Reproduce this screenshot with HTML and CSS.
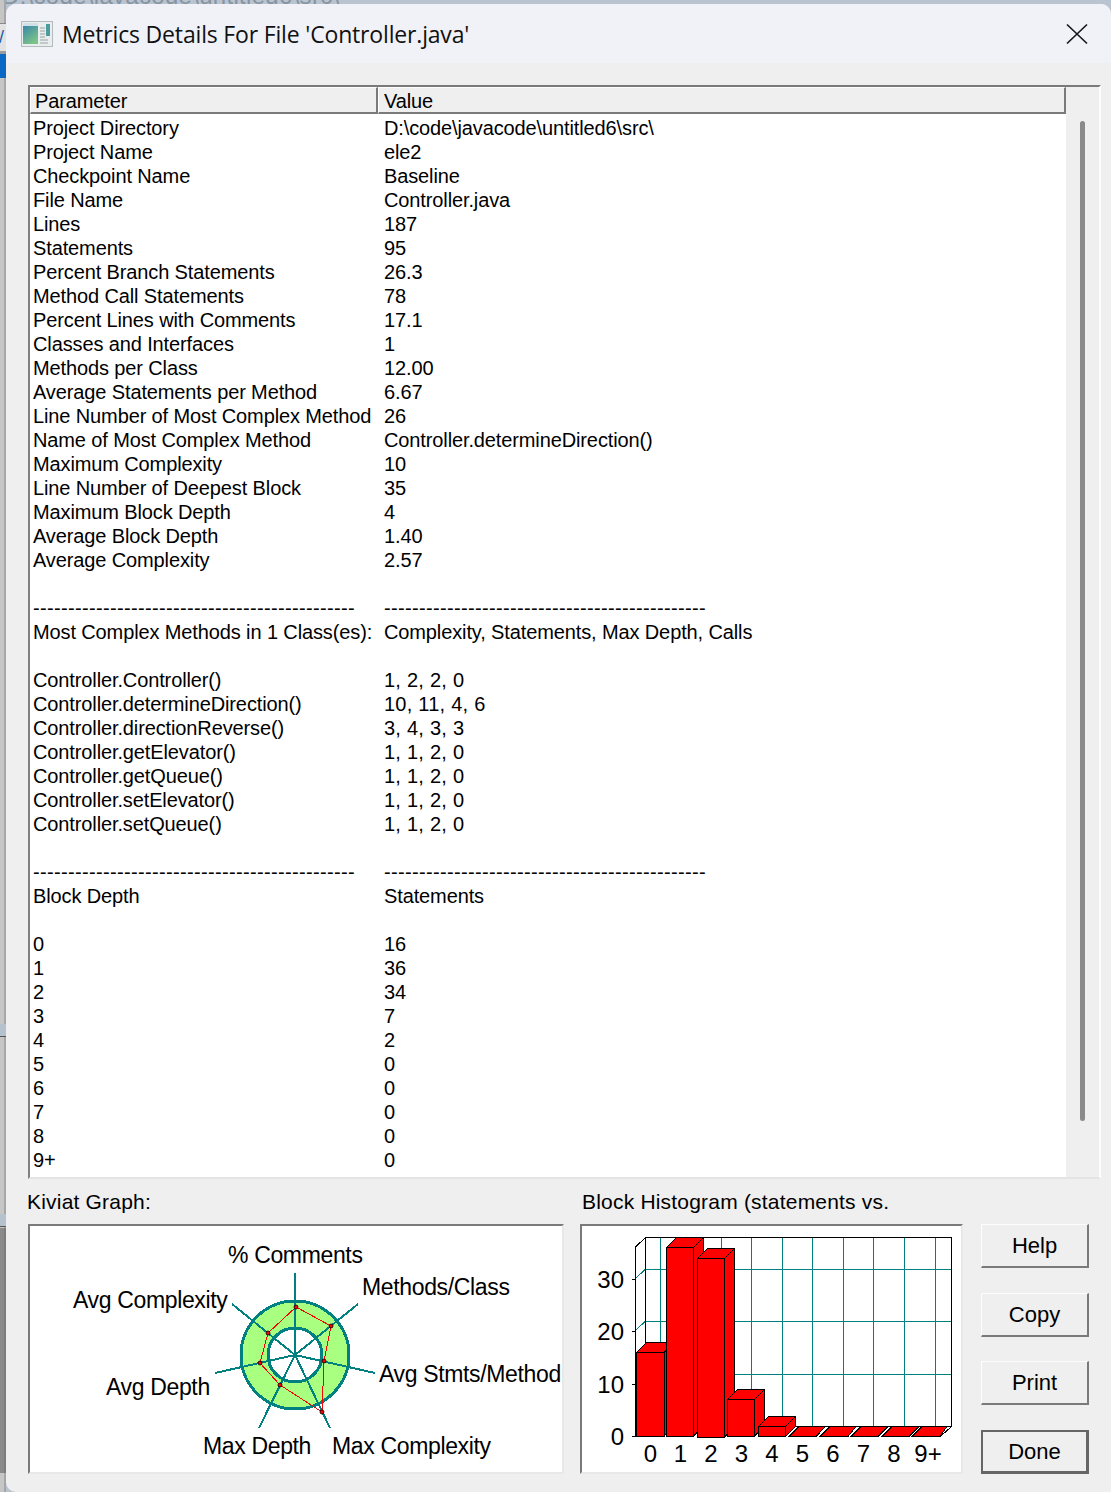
FILE: index.html
```html
<!DOCTYPE html>
<html lang="en">
<head>
<meta charset="utf-8">
<title>Metrics Details</title>
<link rel="stylesheet" href="styles.css">
</head>
<body>
<div class="behind-text">D:\code\javacode\untitled6\src\</div>
<div class="strip strip-base"></div>
<div class="strip strip-menu"><span class="menu-glyph">/</span></div>
<div class="strip strip-blue"></div>
<div class="strip strip-band strip-band-a"></div>
<div class="strip strip-band strip-band-b"></div>
<div class="strip strip-dark"></div>
<main class="window">
  <header class="titlebar">
    <svg class="app-icon" width="32" height="26" viewBox="0 0 32 26">
      <defs>
        <linearGradient id="ig" x1="0" y1="0" x2="0.6" y2="1"><stop offset="0" stop-color="#3a86ab"/><stop offset="1" stop-color="#7cc486"/></linearGradient>
      </defs>
      <rect x="0.5" y="0.5" width="31" height="25" fill="#e9edee" stroke="#b3bbbd"/>
      <rect x="2" y="2" width="15" height="21" fill="#cfe0e6"/>
      <rect x="2" y="5" width="15" height="18" fill="url(#ig)"/>
      <path d="M19 7h5M19 10h5M19 13h5M19 16h5M19 19h8M19 22h8" stroke="#9aa3a5" stroke-width="1"/>
      <rect x="25" y="3" width="4" height="12" fill="#4a9d9c"/>
    </svg>
    <h1 class="title">Metrics Details For File 'Controller.java'</h1>
    <svg class="close" width="22" height="22" viewBox="0 0 22 22"><path d="M1 1.500L21 20.500M21 1.500L1 20.500" stroke="#1a1a1a" stroke-width="1.700" fill="none"/></svg>
  </header>
  <div class="content">
    <section class="frame">
      <div class="listing">
        <div class="head"><div class="hcell hcell-a">Parameter</div><div class="hcell hcell-b">Value</div></div>
        <div class="rows">
          <div class="row"><span>Project Directory</span><span>D:\code\javacode\untitled6\src\</span></div>
          <div class="row"><span>Project Name</span><span>ele2</span></div>
          <div class="row"><span>Checkpoint Name</span><span>Baseline</span></div>
          <div class="row"><span>File Name</span><span>Controller.java</span></div>
          <div class="row"><span>Lines</span><span>187</span></div>
          <div class="row"><span>Statements</span><span>95</span></div>
          <div class="row"><span>Percent Branch Statements</span><span>26.3</span></div>
          <div class="row"><span>Method Call Statements</span><span>78</span></div>
          <div class="row"><span>Percent Lines with Comments</span><span>17.1</span></div>
          <div class="row"><span>Classes and Interfaces</span><span>1</span></div>
          <div class="row"><span>Methods per Class</span><span>12.00</span></div>
          <div class="row"><span>Average Statements per Method</span><span>6.67</span></div>
          <div class="row"><span>Line Number of Most Complex Method</span><span>26</span></div>
          <div class="row"><span>Name of Most Complex Method</span><span>Controller.determineDirection()</span></div>
          <div class="row"><span>Maximum Complexity</span><span>10</span></div>
          <div class="row"><span>Line Number of Deepest Block</span><span>35</span></div>
          <div class="row"><span>Maximum Block Depth</span><span>4</span></div>
          <div class="row"><span>Average Block Depth</span><span>1.40</span></div>
          <div class="row"><span>Average Complexity</span><span>2.57</span></div>
          <div class="row"></div>
          <div class="row row-dash"><span>----------------------------------------------</span><span>----------------------------------------------</span></div>
          <div class="row"><span>Most Complex Methods in 1 Class(es):</span><span>Complexity, Statements, Max Depth, Calls</span></div>
          <div class="row"></div>
          <div class="row row-list"><span>Controller.Controller()</span><span>1, 2, 2, 0</span></div>
          <div class="row row-list"><span>Controller.determineDirection()</span><span>10, 11, 4, 6</span></div>
          <div class="row row-list"><span>Controller.directionReverse()</span><span>3, 4, 3, 3</span></div>
          <div class="row row-list"><span>Controller.getElevator()</span><span>1, 1, 2, 0</span></div>
          <div class="row row-list"><span>Controller.getQueue()</span><span>1, 1, 2, 0</span></div>
          <div class="row row-list"><span>Controller.setElevator()</span><span>1, 1, 2, 0</span></div>
          <div class="row row-list"><span>Controller.setQueue()</span><span>1, 1, 2, 0</span></div>
          <div class="row"></div>
          <div class="row row-dash"><span>----------------------------------------------</span><span>----------------------------------------------</span></div>
          <div class="row"><span>Block Depth</span><span>Statements</span></div>
          <div class="row"></div>
          <div class="row"><span>0</span><span>16</span></div>
          <div class="row"><span>1</span><span>36</span></div>
          <div class="row"><span>2</span><span>34</span></div>
          <div class="row"><span>3</span><span>7</span></div>
          <div class="row"><span>4</span><span>2</span></div>
          <div class="row"><span>5</span><span>0</span></div>
          <div class="row"><span>6</span><span>0</span></div>
          <div class="row"><span>7</span><span>0</span></div>
          <div class="row"><span>8</span><span>0</span></div>
          <div class="row"><span>9+</span><span>0</span></div>
        </div>
      </div>
      <div class="scrollbar"><div class="thumb"></div></div>
    </section>
    <div class="captions">
      <div class="caption caption-kiviat">Kiviat Graph:</div>
      <div class="caption">Block Histogram (statements vs.</div>
    </div>
    <div class="bottom">
      <div class="graph graph-kiviat">
        <svg width="533" height="247" viewBox="30 1226 533 247" class="chart">
          <circle cx="295" cy="1355" r="40.500" fill="none" stroke="#a8ff80" stroke-width="27"/>
          <g class="crisp">
            <circle cx="295" cy="1355" r="54" fill="none" stroke="#008080" stroke-width="3"/>
            <circle cx="295" cy="1355" r="27" fill="none" stroke="#008080" stroke-width="3"/>
            <path d="M295 1355L295 1273M295 1355L358 1304M295 1355L375 1373M295 1355L330 1428M295 1355L259 1428M295 1355L215 1373M295 1355L232 1304" stroke="#008080" stroke-width="2" fill="none"/>
            <polygon points="296,1307 331,1326 324,1361 322,1412 280,1385 260,1363 268,1333" fill="none" stroke="#ff0000" stroke-width="1"/>
          </g>
          <g fill="#ff0000" stroke="#000" stroke-width="0.800">
            <circle cx="296" cy="1307" r="2"/><circle cx="331" cy="1326" r="2"/><circle cx="324" cy="1361" r="2"/><circle cx="322" cy="1412" r="2"/><circle cx="280" cy="1385" r="2"/><circle cx="260" cy="1363" r="2"/><circle cx="268" cy="1333" r="2"/>
          </g>
          <g class="chart-text chart-label">
            <text x="228" y="1263">% Comments</text>
            <text x="362" y="1295">Methods/Class</text>
            <text x="379" y="1382">Avg Stmts/Method</text>
            <text x="332" y="1454">Max Complexity</text>
            <text x="203" y="1454">Max Depth</text>
            <text x="106" y="1395">Avg Depth</text>
            <text x="73" y="1308">Avg Complexity</text>
          </g>
        </svg>
      </div>
      <div class="graph graph-hist">
        <svg width="379" height="247" viewBox="582 1226 379 247" class="chart">
          <g class="crisp" stroke="#008080" stroke-width="1" fill="none">
            <path d="M660.500 1237V1426M691.500 1237V1426M721.500 1237V1426M751.500 1237V1426M782.500 1237V1426M812.500 1237V1426M843.500 1237V1426M873.500 1237V1426M904.500 1237V1426M935.500 1237V1426"/>
            <path d="M645 1269.500H951M645 1321.500H951M645 1374.500H951"/>
            <path d="M635 1279L645 1269.500M635 1331L645 1321.500M635 1384L645 1374.500"/>
          </g>
          <g class="crisp" stroke="#000" stroke-width="1" fill="none">
            <path d="M645.500 1426.500V1237.500H951.500V1426.500L941 1436"/>
            <path d="M645.500 1237.500L635.500 1247V1436.500"/>
            <path d="M645.500 1426.500H951.500"/>
            <path d="M632 1279.500H635M632 1331.500H635M632 1384.500H635M632 1436.500H640"/>
          </g>
          <g class="crisp" fill="#ff0000" stroke="#000" stroke-width="1">
            <path d="M636.500 1352.500L646.500 1342.500H674L664 1352.500Z"/><path d="M664 1352.500L674 1342.500V1426L664 1436Z"/><rect x="636.500" y="1352.500" width="27.500" height="84"/>
            <path d="M666.500 1247.500L676.500 1237.500H703.500L693.500 1247.500Z"/><path d="M693.500 1247.500L703.500 1237.500V1426L693.500 1436Z"/><rect x="666.500" y="1247.500" width="27" height="189"/>
            <path d="M697.500 1258.500L707.500 1248.500H734.500L724.500 1258.500Z"/><path d="M724.500 1258.500L734.500 1248.500V1426L724.500 1437Z"/><rect x="697.500" y="1258.500" width="27" height="179"/>
            <path d="M727.500 1399.500L737.500 1389.500H764.500L754.500 1399.500Z"/><path d="M754.500 1399.500L764.500 1389.500V1426L754.500 1436Z"/><rect x="727.500" y="1399.500" width="27" height="37"/>
            <path d="M758.500 1426.500L768.500 1416.500H795.500L785.500 1426.500Z"/><path d="M785.500 1426.500L795.500 1416.500V1426.500L785.500 1436.500Z"/><rect x="758.500" y="1426.500" width="27" height="10"/>
            <path d="M789 1436.500L799 1426.500H825.500L816 1436.500Z"/>
            <path d="M820 1436.500L830 1426.500H856L848 1436.500Z"/>
            <path d="M851 1436.500L861 1426.500H888L878 1436.500Z"/>
            <path d="M882 1436.500L892 1426.500H919L909 1436.500Z"/>
            <path d="M912 1436.500L922 1426.500H947L940 1436.500Z"/>
          </g>
          <g class="chart-text chart-end">
            <text x="624" y="1288">30</text>
            <text x="624" y="1340">20</text>
            <text x="624" y="1393">10</text>
            <text x="624" y="1445">0</text>
          </g>
          <g class="chart-text chart-mid">
            <text x="650.500" y="1462">0</text>
            <text x="680.500" y="1462">1</text>
            <text x="711" y="1462">2</text>
            <text x="741.500" y="1462">3</text>
            <text x="772" y="1462">4</text>
            <text x="802.500" y="1462">5</text>
            <text x="833" y="1462">6</text>
            <text x="863.500" y="1462">7</text>
            <text x="894" y="1462">8</text>
            <text x="928" y="1462">9+</text>
          </g>
        </svg>
      </div>
      <div class="buttons">
        <button class="btn">Help</button>
        <button class="btn">Copy</button>
        <button class="btn btn-print">Print</button>
        <button class="btn btn-default">Done</button>
      </div>
    </div>
  </div>
</main>
</body>
</html>
```

FILE: styles.css
```css
* { box-sizing: border-box; }
html, body { margin: 0; height: 100%; }
body {
  width: 1111px;
  height: 1492px;
  overflow: hidden;
  position: relative;
  padding: 4px 0 0 6px;
  background: #b9c4d0;
  font-family: "Liberation Sans", Arial, sans-serif;
  color: #000;
}
.behind-text {
  position: absolute;
  left: 2px;
  top: -16px;
  font-size: 24px;
  line-height: 24px;
  letter-spacing: 0.3px;
  color: #8794a1;
}
.strip { position: absolute; left: 0; width: 6px; }
.strip-base {
  top: 0;
  height: 1492px;
  background: #c6c6c6;
  border-right: 2px solid #a6a6a6;
}
.strip-menu {
  top: 23px;
  height: 31px;
  background: #e2e2e2;
  border-top: 1px solid #8a8a8a;
  border-bottom: 3px solid #9a9a9a;
  overflow: hidden;
  font-size: 18px;
  line-height: 26px;
  color: #1a5fa8;
}
.menu-glyph { display: block; margin-left: -1px; }
.strip-blue { top: 54px; height: 24px; background: #0a67c4; }
.strip-band { height: 13px; background: #b5c1cd; border-bottom: 1px solid #555; }
.strip-band-a { top: 1024px; }
.strip-band-b { top: 1214px; }
.strip-dark {
  top: 1228px;
  height: 245px;
  background: #8a8a8a;
  border-right: 2px solid #7c7c7c;
}
.window {
  position: relative;
  width: 1105px;
  height: 1488px;
  background: #efefef;
  border-radius: 10px 10px 0 10px;
  display: flex;
  flex-direction: column;
  overflow: hidden;
}
.titlebar {
  height: 59px;
  flex: none;
  background: #f0f2f8;
  display: flex;
  align-items: center;
  padding: 0 23px 0 15px;
}
.app-icon { flex: none; margin-right: 10px; }
.title {
  flex: 1;
  margin: 0 0 0 -1px;
  font: 400 23px/30px "Open Sans", "Noto Sans", sans-serif;
  letter-spacing: -0.17px;
  color: #111;
}
.content { padding: 22px 10px 0 22px; flex: 1; display: flex; flex-direction: column; }
.frame {
  width: 1073px;
  height: 1094px;
  flex: none;
  display: flex;
  border-style: solid;
  border-width: 2px;
  border-color: #7a7a7a #fdfdfd #e4e4e4 #808080;
}
.listing {
  width: 1036px;
  flex: none;
  background: #fff;
  font-size: 20px;
  letter-spacing: -0.12px;
}
.head { display: flex; height: 27px; }
.hcell {
  height: 27px;
  background: #efefef;
  border-style: solid;
  border-width: 1px 2px 2px 1px;
  border-color: #fdfdfd #7a7a7a #7a7a7a #fdfdfd;
  padding-left: 4px;
  line-height: 26px;
  white-space: nowrap;
}
.hcell-a { width: 348px; }
.hcell-b { flex: 1; padding-left: 5px; }
.rows { padding: 2px 0 0 3px; }
.row { display: flex; height: 24px; line-height: 24px; white-space: nowrap; }
.row span:first-child { width: 351px; flex: none; }
.row-dash { letter-spacing: 0.34px; line-height: 25px; }
.row-list span:last-child { letter-spacing: 0.25px; }
.scrollbar { flex: 1; position: relative; }
.thumb {
  position: absolute;
  left: 14px;
  top: 34px;
  width: 5px;
  height: 1000px;
  border-radius: 3px;
  background: #8a8a8a;
}
.captions {
  display: flex;
  height: 45px;
  align-items: center;
  font-size: 21px;
  letter-spacing: 0.2px;
  margin-left: -1px;
  flex: none;
}
.caption-kiviat { width: 555px; }
.bottom { display: flex; align-items: flex-start; flex: none; }
.graph {
  height: 250px;
  flex: none;
  background: #fff;
  border-style: solid;
  border-width: 2px;
  border-color: #7a7a7a #e8e8e8 #e8e8e8 #7a7a7a;
}
.graph-kiviat { width: 536px; }
.graph-hist { width: 383px; margin-left: 16px; }
.chart { display: block; }
.crisp { shape-rendering: crispEdges; }
.chart-text { font-family: "Liberation Sans", Arial, sans-serif; font-size: 24px; fill: #000; }
.chart-label { font-size: 23px; letter-spacing: -0.35px; }
.chart-end { text-anchor: end; }
.chart-mid { text-anchor: middle; }
.buttons { margin-left: 18px; width: 108px; display: flex; flex-direction: column; gap: 25px; flex: none; }
.btn {
  height: 44px;
  width: 108px;
  padding: 0;
  font: 400 22px "Liberation Sans", Arial, sans-serif;
  color: #000;
  background: #efefef;
  border-style: solid;
  border-width: 1px 2px 2px 1px;
  border-color: #fdfdfd #7a7a7a #7a7a7a #fdfdfd;
}
.btn-print { margin-top: -1px; }
.btn-default { border-width: 2px 3px 3px 2px; border-color: #666; }
```
